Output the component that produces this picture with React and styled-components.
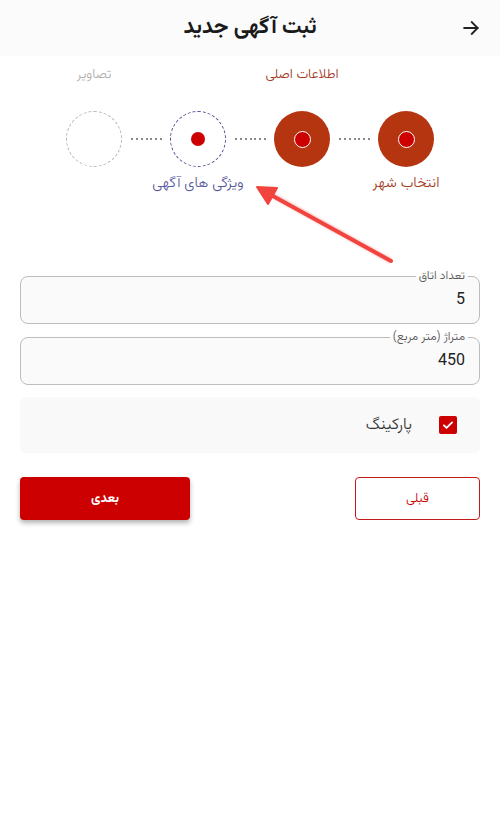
import React from "react";
import styled, { createGlobalStyle } from "styled-components";

const Global = createGlobalStyle`
  html, body { margin: 0; padding: 0; background: #fff; }
  body { font-family: "Vazirmatn", "Noto Sans Arabic", "DejaVu Sans", sans-serif; }
  * { box-sizing: border-box; }
`;

const Page = styled.div`
  position: relative;
  width: 500px;
  min-height: 832px;
  background: #fff;
  direction: rtl;
`;

const Header = styled.header`
  height: 56px;
  background: #fbfbfc;
  display: flex;
  align-items: center;
  justify-content: center;
  position: relative;
`;

const Title = styled.h1`
  margin: 0;
  font-size: 21.5px;
  font-weight: 700;
  color: #1a1a1a;
`;

const BackButton = styled.button`
  position: absolute;
  right: 18px;
  top: 17px;
  border: 0;
  background: transparent;
  padding: 0;
  width: 22px;
  height: 22px;
  display: flex;
  align-items: center;
  justify-content: center;
`;

const Stepper = styled.section`
  padding: 0 42px;
  display: flex;
  flex-direction: column;
`;

const LabelRow = styled.div`
  display: grid;
  grid-template-columns: repeat(4, 1fr);
  height: ${(p) => p.$h}px;
  align-items: center;
`;

const StepLabel = styled.span`
  text-align: center;
  font-size: ${(p) => p.$size || 13.5}px;
  font-weight: 300;
  color: ${(p) => p.$color};
  white-space: nowrap;
`;

const CircleRow = styled.div`
  display: flex;
  align-items: center;
  padding: 0 24px;
  height: 58px;
  margin-top: 18px;
`;

const Circle = styled.div`
  width: 56px;
  height: 56px;
  flex: none;
  border-radius: 50%;
  display: flex;
  align-items: center;
  justify-content: center;
  background: ${(p) => (p.$filled ? "#b63511" : "#fff")};
  border: ${(p) => (p.$dash ? `1.3px dashed ${p.$dash}` : "none")};
`;

const Dot = styled.span`
  width: ${(p) => p.$size}px;
  height: ${(p) => p.$size}px;
  border-radius: 50%;
  background: #cc0000;
  border: ${(p) => (p.$ring ? "1.2px solid #fff" : "none")};
`;

const Connector = styled.div`
  flex: 1;
  height: 2px;
  margin: 0 8px;
  background: repeating-linear-gradient(
    to left,
    #8a8a8a 0 2px,
    transparent 2px 4.8px
  );
`;

const Form = styled.form`
  padding: 71px 20px 0;
  display: flex;
  flex-direction: column;
  gap: 6px;
`;

const Field = styled.fieldset`
  margin: 0;
  padding: 0 14px;
  border: 1px solid #bdbdbd;
  border-radius: 8px;
  background: #fafafa;
  height: 55px;
  min-width: 0;
`;

const Legend = styled.legend`
  font-size: 12px;
  font-weight: 300;
  color: #555;
  padding: 0 3px;
  margin-right: -3px;
  line-height: 14px;
`;

const Value = styled.div`
  font-family: Roboto, "Liberation Sans", sans-serif;
  font-size: 16px;
  color: #222;
  text-align: right;
  padding-top: 6px;
`;

const CheckRow = styled.label`
  margin-top: 6px;
  height: 56px;
  background: #f9f9f9;
  border-radius: 6px;
  display: flex;
  align-items: center;
  gap: 27px;
  padding-right: 23px;
  font-size: 16px;
  font-weight: 300;
  color: #333;
`;

const Box = styled.span`
  width: 18px;
  height: 18px;
  border-radius: 2px;
  background: #cc0000;
  display: flex;
  align-items: center;
  justify-content: center;
`;

const Buttons = styled.div`
  margin-top: 18px;
  display: flex;
  justify-content: space-between;
`;

const Btn = styled.button`
  height: 43px;
  width: ${(p) => p.$w}px;
  border-radius: 4px;
  font-family: inherit;
  font-size: 13px;
  font-weight: ${(p) => (p.$primary ? 700 : 300)};
  color: ${(p) => (p.$primary ? "#fff" : "#cc0000")};
  background: ${(p) => (p.$primary ? "#cc0000" : "#fff")};
  border: ${(p) => (p.$primary ? "none" : "1px solid #c41a1a")};
  box-shadow: ${(p) =>
    p.$primary ? "0 3px 5px rgba(0,0,0,0.3)" : "none"};
`;

const Annotation = styled.svg`
  position: absolute;
  left: 0;
  top: 0;
  pointer-events: none;
`;

export default function App() {
  return (
    <Page>
      <Global />
      <Header>
        <Title>ثبت آگهی جدید</Title>
        <BackButton aria-label="back">
          <svg width="20" height="20" viewBox="0 0 24 24" fill="none" stroke="#222" strokeWidth="2.2" strokeLinecap="square">
            <path d="M4 12h16M13 5l7 7-7 7" />
          </svg>
        </BackButton>
      </Header>

      <Stepper>
        <LabelRow $h={36}>
          <span />
          <StepLabel $color="#a3391c">اطلاعات اصلی</StepLabel>
          <span />
          <StepLabel $color="#b0b0b0">تصاویر</StepLabel>
        </LabelRow>
        <CircleRow>
          <Circle $filled>
            <Dot $size={17} $ring />
          </Circle>
          <Connector />
          <Circle $filled>
            <Dot $size={17} $ring />
          </Circle>
          <Connector />
          <Circle $dash="#4b4b8c">
            <Dot $size={14} />
          </Circle>
          <Connector />
          <Circle $dash="#b5b5b5" />
        </CircleRow>
        <LabelRow $h={30}>
          <StepLabel $color="#a3391c" $size={14.5}>انتخاب شهر</StepLabel>
          <span />
          <StepLabel $color="#56569a" $size={14.5}>ویژگی های آگهی</StepLabel>
          <span />
        </LabelRow>
      </Stepper>

      <Form>
        <Field>
          <Legend>تعداد اتاق</Legend>
          <Value>5</Value>
        </Field>
        <Field>
          <Legend>متراژ (متر مربع)</Legend>
          <Value>450</Value>
        </Field>
        <CheckRow>
          <Box>
            <svg width="14" height="14" viewBox="0 0 24 24" fill="none" stroke="#fff" strokeWidth="3.2" strokeLinecap="round" strokeLinejoin="round">
              <path d="M5 12.5l4.5 4.5L19 7.5" />
            </svg>
          </Box>
          پارکینگ
        </CheckRow>
        <Buttons>
          <Btn type="button" $w={125}>قبلی</Btn>
          <Btn type="button" $w={170} $primary>بعدی</Btn>
        </Buttons>
      </Form>

      <Annotation width="500" height="300" viewBox="0 0 500 300">
        <defs>
          <filter id="sh" x="-20%" y="-20%" width="140%" height="140%">
            <feGaussianBlur stdDeviation="1.2" />
          </filter>
        </defs>
        <g opacity="0.35" filter="url(#sh)">
          <line x1="391" y1="261" x2="272" y2="195" stroke="#f05050" strokeWidth="5" />
        </g>
        <line x1="391" y1="261" x2="271" y2="195" stroke="#f2443f" strokeWidth="4" strokeLinecap="round" />
        <path d="M257 187 L277 188 L268 204 Z" fill="#f2443f" stroke="#f2443f" strokeWidth="2" strokeLinejoin="round" />
      </Annotation>
    </Page>
  );
}
